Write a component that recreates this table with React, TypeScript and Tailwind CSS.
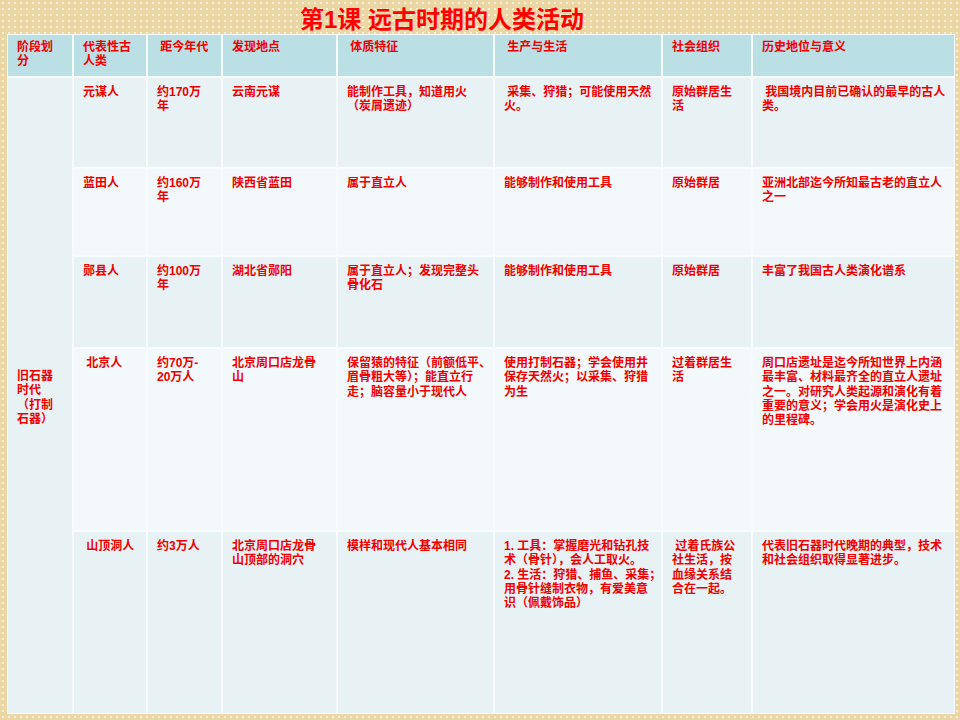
import React from 'react';

type Row = {
  bg: string;
  cells: string[][];
};

const headers: string[][] = [
  ['阶段划', '分'],
  ['代表性古', '人类'],
  [' 距今年代'],
  ['发现地点'],
  [' 体质特征'],
  [' 生产与生活'],
  ['社会组织'],
  ['历史地位与意义'],
];

const rows: Row[] = [
  {
    bg: 'bg-[#e8f2f4]',
    cells: [
      ['元谋人'],
      ['约170万', '年'],
      ['云南元谋'],
      ['能制作工具，知道用火', '（炭屑遗迹）'],
      [' 采集、狩猎；可能使用天然', '火。'],
      ['原始群居生', '活'],
      [' 我国境内目前已确认的最早的古人', '类。'],
    ],
  },
  {
    bg: 'bg-[#f3f9fa]',
    cells: [
      ['蓝田人'],
      ['约160万', '年'],
      ['陕西省蓝田'],
      ['属于直立人'],
      ['能够制作和使用工具'],
      ['原始群居'],
      ['亚洲北部迄今所知最古老的直立人', '之一'],
    ],
  },
  {
    bg: 'bg-[#e8f2f4]',
    cells: [
      ['郧县人'],
      ['约100万', '年'],
      ['湖北省郧阳'],
      ['属于直立人；发现完整头', '骨化石'],
      ['能够制作和使用工具'],
      ['原始群居'],
      ['丰富了我国古人类演化谱系'],
    ],
  },
  {
    bg: 'bg-[#f3f9fa]',
    cells: [
      [' 北京人'],
      ['约70万-', '20万人'],
      ['北京周口店龙骨', '山'],
      ['保留猿的特征（前额低平、', '眉骨粗大等）；能直立行', '走；脑容量小于现代人'],
      ['使用打制石器；学会使用井', '保存天然火；以采集、狩猎', '为生'],
      ['过着群居生', '活'],
      [
        '周口店遗址是迄今所知世界上内涵',
        '最丰富、材料最齐全的直立人遗址',
        '之一。对研究人类起源和演化有着',
        '重要的意义；学会用火是演化史上',
        '的里程碑。',
      ],
    ],
  },
  {
    bg: 'bg-[#e8f2f4]',
    cells: [
      [' 山顶洞人'],
      ['约3万人'],
      ['北京周口店龙骨', '山顶部的洞穴'],
      ['模样和现代人基本相同'],
      [
        '1. 工具：掌握磨光和钻孔技',
        '术（骨针），会人工取火。',
        '2. 生活：狩猎、捕鱼、采集；',
        '用骨针缝制衣物，有爱美意',
        '识（佩戴饰品）',
      ],
      [' 过着氏族公', '社生活，按', '血缘关系结', '合在一起。'],
      ['代表旧石器时代晚期的典型，技术', '和社会组织取得显著进步。'],
    ],
  },
];

const Lines: React.FC<{ lines: string[] }> = ({ lines }) => (
  <>
    {lines.map((line, i) => (
      <div key={i} className="whitespace-pre">
        {line}
      </div>
    ))}
  </>
);

const App: React.FC = () => {
  return (
    <div className="w-[960px] h-[720px] bg-[#ead7a5] bg-[radial-gradient(circle,#f7eed6_0.9px,transparent_1.3px)] bg-[length:6px_6px] flex flex-col font-['Liberation_Sans','Noto_Sans_CJK_SC',sans-serif] text-[#ee0000] font-bold">
      {/* title */}
      <div className="h-[34px] pt-[7px] pl-[300px] whitespace-pre text-[24px] leading-[26px] text-[#ff0000]">
        第1课 远古时期的人类活动
      </div>

      {/* table */}
      <div className="ml-[7px] w-[948px] p-[1px] bg-[#f8fbfc] grid grid-cols-[64px_72px_73px_113px_155px_166px_88px_201px] grid-rows-[41px_89px_86px_90px_181px_181px] gap-[2px] text-[12px] leading-[14.3px]">
        {headers.map((h, i) => (
          <div key={i} className="bg-[#badfe4] pl-[9px] pt-[5px]">
            <Lines lines={h} />
          </div>
        ))}

        <div className="row-span-5 bg-[#e8f2f4] pl-[9px] pt-[4px] flex flex-col justify-center">
          <Lines lines={['旧石器', '时代', '（打制', '石器）']} />
        </div>

        {rows.map((row, r) =>
          row.cells.map((cell, c) => (
            <div key={`${r}-${c}`} className={`${row.bg} pl-[9px] pt-[7px]`}>
              <Lines lines={cell} />
            </div>
          ))
        )}
      </div>
    </div>
  );
};

export default App;
